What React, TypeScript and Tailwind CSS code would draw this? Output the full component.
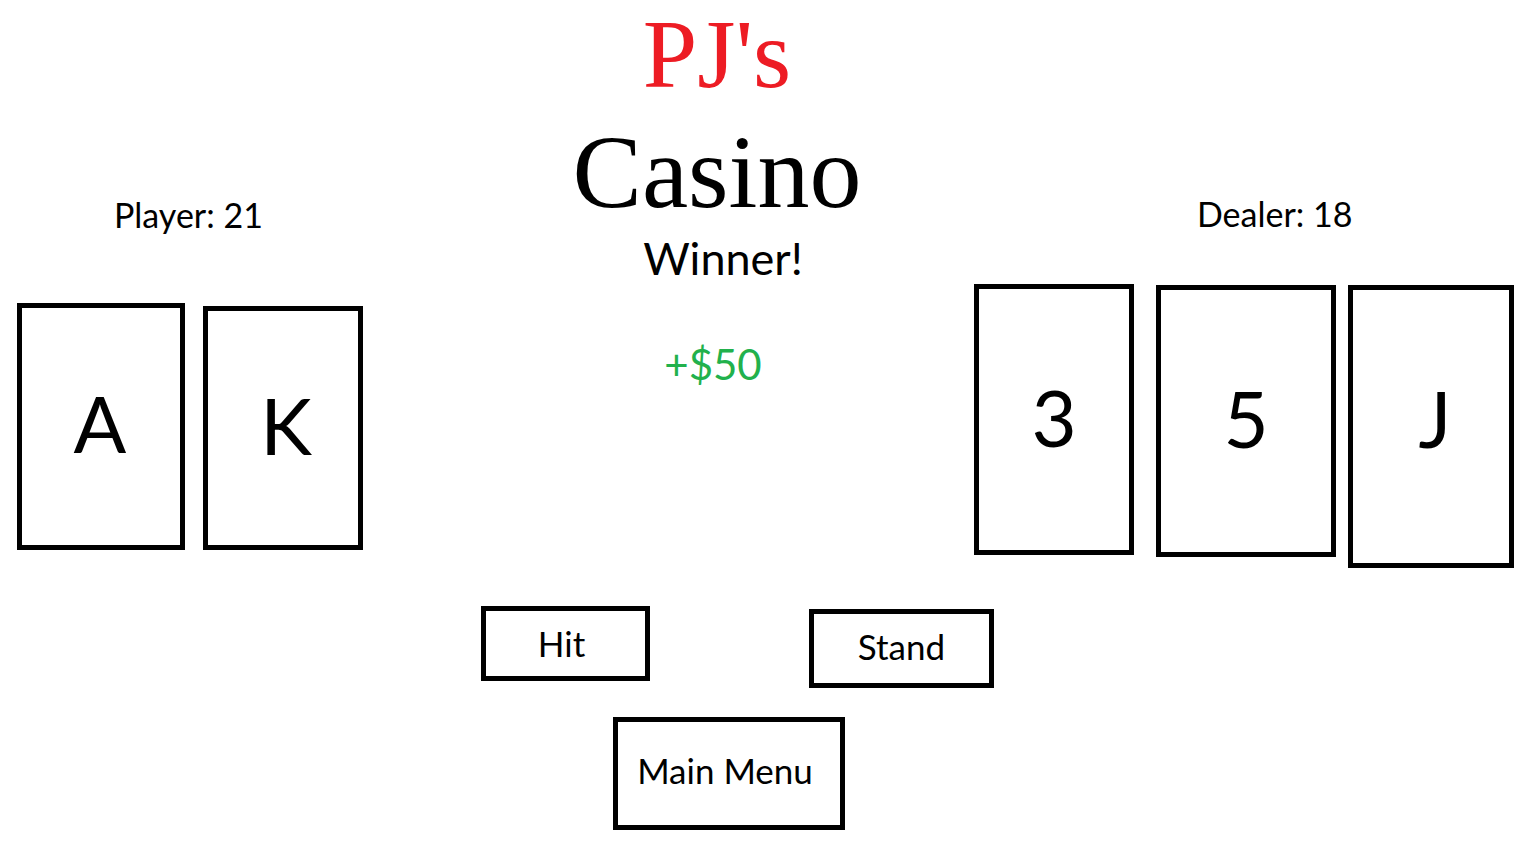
const sans = "font-['Lato','Liberation_Sans',sans-serif]";

function Card({ label, className }: { label: string; className: string }) {
  return (
    <div
      className={`border-[5px] border-black bg-white flex items-center justify-center text-[78px] leading-none text-black ${className}`}
    >
      {label}
    </div>
  );
}

function Button({ label, className }: { label: string; className: string }) {
  return (
    <button
      className={`border-[5px] border-black bg-white flex items-center justify-center text-[35px] leading-none text-black ${className}`}
    >
      {label}
    </button>
  );
}

export default function App() {
  return (
    <div className={`w-[1535px] h-[862px] bg-white overflow-hidden ${sans}`}>
      <div className="flex items-start h-[606px]">
        {/* player side */}
        <div className="w-[460px] flex flex-col">
          <div className="mt-[198px] ml-[114px] text-[34px] leading-none text-black">Player: 21</div>
          <div className="flex items-start gap-[18px] ml-[17px] mt-[71px]">
            <Card label="A" className="w-[168px] h-[247px] pb-[8px] pr-[2px]" />
            <Card label="K" className="w-[160px] h-[244px] mt-[3px] pb-[6px] pl-[6px]" />
          </div>
        </div>

        {/* title + result */}
        <div className="w-[514px] flex flex-col items-center">
          <div className="mt-[5px] text-[98px] leading-none text-[#ed1c24] font-['Liberation_Serif',serif]">PJ's</div>
          <div className="mt-[17px] text-[104px] leading-none text-black font-['Liberation_Serif',serif]">Casino</div>
          <div className="mt-[12px] ml-[12px] text-[45px] leading-none text-black">Winner!</div>
          <div className="mt-[62px] mr-[8px] text-[42px] leading-none text-[#22b14c]">+$50</div>
        </div>

        {/* dealer side */}
        <div className="flex-1 flex flex-col">
          <div className="mt-[197px] ml-[223px] text-[34px] leading-none text-black">Dealer: 18</div>
          <div className="flex items-start mt-[53px]">
            <Card label="3" className="w-[160px] h-[271px] pb-[6px]" />
            <Card label="5" className="w-[180px] h-[272px] ml-[22px] mt-[1px] pb-[6px]" />
            <Card label="J" className="w-[166px] h-[283px] ml-[12px] mt-[1px] pb-[18px] pl-[8px]" />
          </div>
        </div>
      </div>

      {/* actions */}
      <div className="flex flex-col">
        <div className="flex items-start pl-[481px]">
          <Button label="Hit" className="w-[169px] h-[75px] pr-[8px]" />
          <Button label="Stand" className="w-[185px] h-[79px] ml-[159px] mt-[3px] pb-[4px]" />
        </div>
        <Button label="Main Menu" className="w-[232px] h-[113px] ml-[613px] mt-[29px] pb-[6px] pr-[8px]" />
      </div>
    </div>
  );
}
